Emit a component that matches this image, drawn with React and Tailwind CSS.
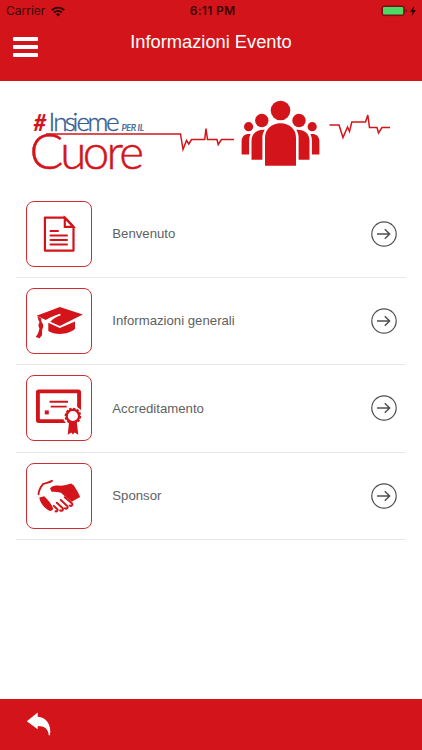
import React from 'react';

const RED = '#d3151b';

function StatusBar() {
  return (
    <div className="grid h-[22px] grid-cols-3 items-center pl-[6px] pr-[5px] font-['Inter',sans-serif] text-[#3a0305]">
      <div className="flex items-center gap-[6px]">
        <span className="text-[12px] leading-[22px]">Carrier</span>
        <svg width="14" height="11" viewBox="0 0 14 11" fill="none" stroke="#250203" strokeWidth="1.9">
          <path d="M.8 4.2a8.8 8.8 0 0 1 12.4 0" />
          <path d="M3.1 6.5a5.5 5.5 0 0 1 7.8 0" />
          <path d="M4.9 8.2a3 3 0 0 1 4.2 0L7 10.4z" fill="#250203" stroke="none" />
        </svg>
      </div>
      <span className="pl-[2px] text-center text-[12px] font-semibold leading-[22px] tracking-[0.3px]">6:11 PM</span>
      <div className="flex items-center justify-end">
        <svg width="36" height="12" viewBox="0 0 36 12">
          <rect x=".9" y="1" width="22.4" height="9.6" rx="2.4" fill="#74151a" stroke="#7d0c10" />
          <rect x="2" y="2" width="20.2" height="7.6" rx="1" fill="#4cd964" />
          <path d="M24.7 4.3c1.4.5 1.4 2.5 0 3z" fill="#5a090c" />
          <path d="M33.2 1 29 6.7h2.6l-.8 4.3L35 5.1h-2.7z" fill="#250203" />
        </svg>
      </div>
    </div>
  );
}

function Header() {
  return (
    <header className="h-[81px] bg-[#d3151b]">
      <StatusBar />
      <div className="grid grid-cols-[60px_1fr_60px]">
        <button className="ml-[13px] mt-[15px] flex w-[25px] flex-col gap-[4px]" aria-label="Menu">
          <span className="h-[4px] w-full rounded-[1px] bg-white" />
          <span className="h-[4px] w-full rounded-[1px] bg-white" />
          <span className="h-[4px] w-full rounded-[1px] bg-white" />
        </button>
        <h1 className="mt-[8px] whitespace-nowrap text-center text-[18.3px] leading-[24px] text-white">Informazioni Evento</h1>
      </div>
    </header>
  );
}

function Logo() {
  return (
    <svg className="block font-['Lato',sans-serif]" width="422" height="110" viewBox="0 81 422 110" fill="none">
      <text x="33.500" y="130.500" fontSize="22" fontWeight="900" fontStyle="italic" fill={RED}>#</text>
      <text x="48.600 53.300 64.800 72.600 76.400 87.600 106" y="131" fontSize="26" fontWeight="300" fill="#335e93" stroke="#335e93" strokeWidth=".4">Insieme</text>
      <text x="121.500" y="131" fontSize="9.200" fontStyle="italic" fontWeight="400" fill="#335e93" stroke="#335e93" strokeWidth=".2" textLength="22.500" lengthAdjust="spacing">PER IL</text>
      <text x="29.500 60.200 82.700 106.500 119.300" y="169.300" fontSize="47.500" fontWeight="300" fill={RED} stroke={RED} strokeWidth=".5">
        <tspan fontSize="50">C</tspan>uore
      </text>
      <path d="M46 134H180.500L183 149.500l3.500-9 2.300 3.500 2.700-4.500h13.200l1.300-11 1.500 11H217l1.200 5 3.200-5H234" stroke={RED} strokeWidth="1.500" />
      <path d="M329.500 125h9.500l4 12.500 4.500-10.500 2 4.500 2.300-9.500h13.700l2.300-7 1.700 12.500h7.500l1.500 5.500 3.500-5.500h8" stroke={RED} strokeWidth="1.500" />
      <g fill={RED}>
        <circle cx="280.500" cy="110.500" r="9.800" />
        <circle cx="261.800" cy="120.500" r="6.700" />
        <circle cx="299" cy="120.500" r="6.700" />
        <circle cx="248.600" cy="126.700" r="4.600" />
        <circle cx="312.200" cy="126.700" r="4.600" />
        <path d="M265 165.800v-28c0-8 6-14.500 15.500-14.500s15.500 6.500 15.500 14.500v28z" />
        <path d="M251.500 159.800v-19c0-7 5-11.500 13.200-11-1.500 2.600-2.300 5-2.300 8v22z" />
        <path d="M309.500 159.800v-19c0-7-5-11.500-13.200-11 1.500 2.600 2.300 5 2.300 8v22z" />
        <path d="M241.600 154.400v-13c0-5.500 4-8 9-7.200-1 2-1.500 4-1.500 6.500v13.700z" />
        <path d="M319.400 154.400v-13c0-5.500-4-8-9-7.200 1 2 1.500 4 1.500 6.500v13.700z" />
      </g>
    </svg>
  );
}

function DocumentIcon() {
  return (
    <svg width="66" height="66" viewBox="0 0 66 66" fill="none" stroke={RED} strokeWidth="2.200">
      <path d="M18.900 16.600h20l8.600 9.200v23.800H18.900z" strokeLinejoin="round" />
      <path d="M38.800 17v8.800h8.500z" fill="#fff" />
      <path d="M24.500 30h7.500M24.500 34.600h16.500M24.500 39h16.500M24.500 43.500h16.500" strokeWidth="2" strokeLinecap="round" />
    </svg>
  );
}

function GraduationIcon() {
  return (
    <svg width="66" height="66" viewBox="0 0 66 66" fill={RED}>
      <g transform="translate(-.7 0)">
        <path d="M11.300 27.700 34.500 19l23 7.500L34.500 38l-9.500-4.200c2.600-2.900 6-4.700 10.500-6.500l-.7-1.500C28.500 27.800 24.300 29.800 20.500 32z" />
        <path d="M23 34.800 34.500 40l15.200-6.600v7.400c-5.500 5.800-19.500 7-26.700 2.200z" />
        <path d="M12.200 28.300l3.800 2.200c-.3 2 .2 3.500 1 4.600 1.200 1.500 1.200 3.200.4 5.100-1 2.500-.5 4.800-.7 7.100l-2.700 3.100-3.600-1.600c2.500-3 3.300-5.500 3.700-8.600-1.300-1.600-1.300-4.300.1-5.700-.8-1.700-1.700-4-2-6.200z" />
      </g>
    </svg>
  );
}

function CertificateIcon() {
  return (
    <svg width="66" height="66" viewBox="0 0 66 66" fill="none">
      <rect x="11.900" y="16.400" width="41.200" height="29.700" rx=".8" stroke={RED} strokeWidth="3.900" />
      <path d="M23.500 26.800h18.500M24.700 31.600h16" stroke={RED} strokeWidth="1.900" />
      <path d="M18.800 35.400h4v4h-4z" fill={RED} />
      <circle cx="46.900" cy="41" r="10" fill="#fff" />
      <path d="m43.200 46-1.500 13.800 3.700-2.300 1.500 2 1.700-2 3.700 2.300L50.600 46z" fill={RED} />
      <circle cx="46.900" cy="41" r="7.500" stroke={RED} strokeWidth="1.600" strokeDasharray="2.600 1.300" />
      <circle cx="46.900" cy="41" r="6.200" fill="#fff" stroke={RED} strokeWidth="2.300" />
    </svg>
  );
}

function HandshakeIcon() {
  return (
    <svg width="66" height="66" viewBox="0 0 66 66" fill={RED}>
      <path d="M12.500 31.200c.4-4.200 2-7.200 4.800-10.300 3.200-1 6-1.200 8.700-3" fill="none" stroke={RED} strokeWidth="1.900" strokeLinecap="round" />
      <path d="M24 25.600c1.500-2.700 5.400-3.500 9.900-2.800 4.300-.1 7.600-1.600 11.200-2.400l2.800 2.200c1.800 3.500 4.600 6.600 6.200 11.500l-8.300 4.600c-3.500-2.800-7.300-5.200-10.800-8.900-3.100-1.300-6.700-.3-9.400-1.100z" />
      <path d="m13.300 34.500 4.900-1.200c3.700 3.800 7.500 7.600 9 12.300-.4 1.900-2.300 2.700-4 2.200-4.700-3-8.900-7-9.900-13.300z" />
      <g fill="none" stroke={RED} strokeWidth="2" strokeLinecap="round">
        <path d="m38.700 34.300 7.400 6.200c1 1.600-.8 3-2.400 2" />
        <path d="m34.800 37 6.700 6.300c.7 1.900-1.200 2.900-2.600 1.900" />
        <path d="m30.800 39.800 6 5.500c.6 1.900-1.100 3-2.600 2.100" />
        <path d="m27.800 42.900 3.600 3.500c.5 1.400-.6 2.300-1.800 1.900" />
      </g>
    </svg>
  );
}

function ArrowCircle() {
  return (
    <svg width="26" height="26" viewBox="0 0 26 26" fill="none" stroke="#505050">
      <circle cx="13" cy="13" r="12.200" strokeWidth="1.200" />
      <path d="M6 13h12.500M13.800 8.200l4.800 4.800-4.800 4.800" strokeWidth="1.500" />
    </svg>
  );
}

const items = [
  { label: 'Benvenuto', Icon: DocumentIcon },
  { label: 'Informazioni generali', Icon: GraduationIcon },
  { label: 'Accreditamento', Icon: CertificateIcon },
  { label: 'Sponsor', Icon: HandshakeIcon },
];

export default function App() {
  return (
    <div className="flex h-[750px] w-[422px] flex-col overflow-hidden bg-white font-['Liberation_Sans',Arial,sans-serif]">
      <Header />
      <main className="flex-1">
        <Logo />
        <ul className="px-4">
          {items.map(({ label, Icon }) => (
            <li key={label} className="flex h-[87.2px] items-center border-b border-[#e8e8e8] pl-[10px] pr-[9.5px]">
              <div className="flex h-[66px] w-[66px] shrink-0 items-center justify-center rounded-[8px] border border-[#cf2b31]">
                <div className="shrink-0"><Icon /></div>
              </div>
              <span className="ml-[20.3px] flex-1 text-[13.2px] text-[#616161]">{label}</span>
              <ArrowCircle />
            </li>
          ))}
        </ul>
      </main>
      <footer className="flex h-[51px] shrink-0 items-start bg-[#d3151b] pl-[26px] pt-[13px]">
        <svg width="26" height="25" viewBox="0 0 26 25" fill="#fff">
          <path d="M.8 9.300 11.700.5v4.200c8.500.4 14 8 12.300 18.500h-1.200c-.5-6.200-4-9.200-11.100-9.300v3.400z" />
        </svg>
      </footer>
    </div>
  );
}
